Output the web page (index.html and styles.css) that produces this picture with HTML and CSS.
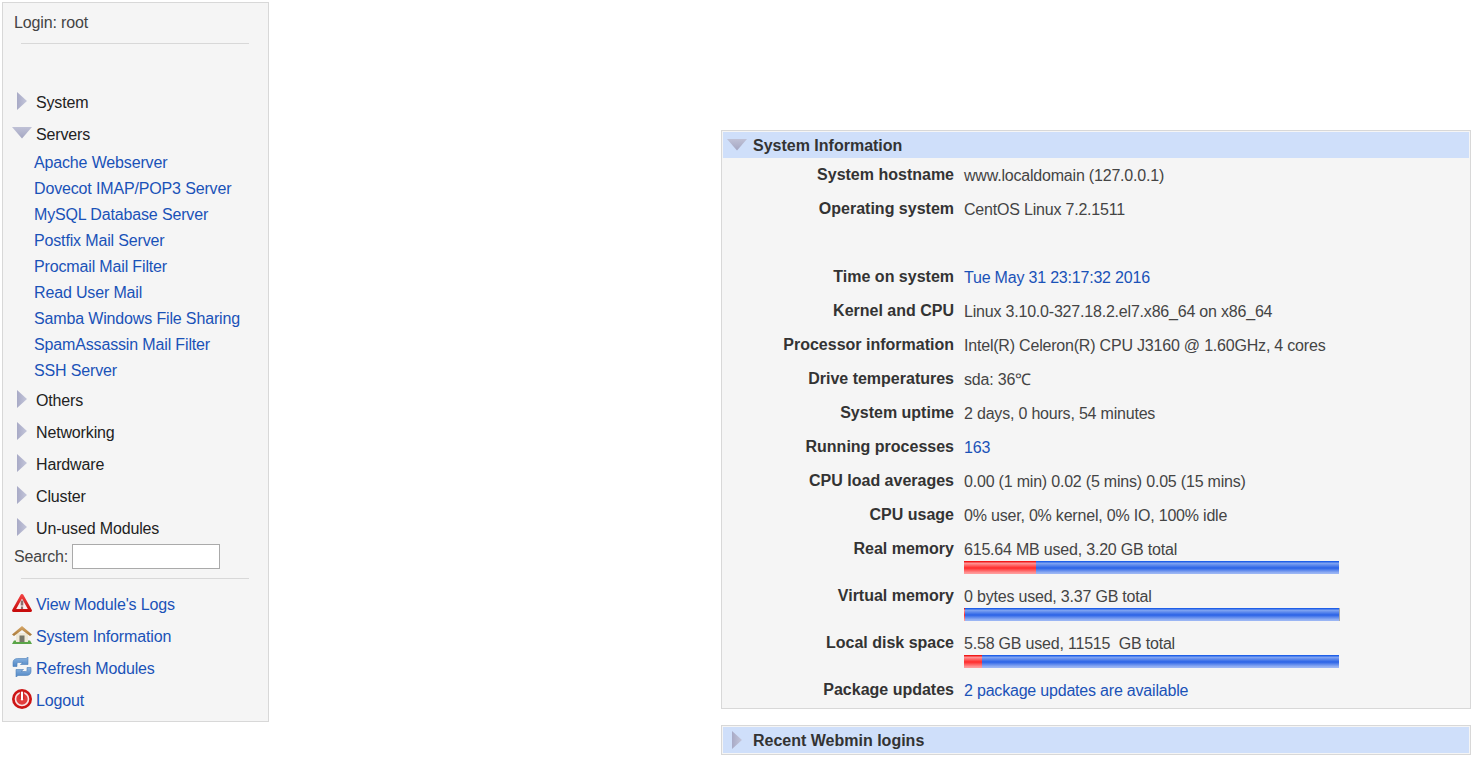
FILE: index.html
```html
<!DOCTYPE html>
<html lang="en">
<head>
    <meta charset="UTF-8">
    <title>Webmin</title>
    <link rel="stylesheet" href="styles.css">
</head>
<body>
    <svg class="defs" width="0" height="0">
        <defs>
            <linearGradient id="arrowRight" x1="0" y1="0" x2="1" y2="0">
                <stop offset="0" stop-color="#a8aac6"/>
                <stop offset="1" stop-color="#c4c6da"/>
            </linearGradient>
            <linearGradient id="arrowDown" x1="0" y1="0" x2="0" y2="1">
                <stop offset="0" stop-color="#bfc1d6"/>
                <stop offset="1" stop-color="#a4a6c2"/>
            </linearGradient>
            <linearGradient id="warnRed" x1="0" y1="0" x2="0" y2="1">
                <stop offset="0" stop-color="#f04040"/>
                <stop offset="1" stop-color="#c80c0c"/>
            </linearGradient>
            <linearGradient id="syncBlue" x1="0" y1="0" x2="0" y2="1">
                <stop offset="0" stop-color="#8db6e2"/>
                <stop offset="1" stop-color="#4f86c4"/>
            </linearGradient>
            <linearGradient id="roof" x1="0" y1="0" x2="0" y2="1">
                <stop offset="0" stop-color="#d8a868"/>
                <stop offset="1" stop-color="#a87838"/>
            </linearGradient>
        </defs>
    </svg>

    <div class="sidebar">
        <div class="login">Login: root</div>
        <hr class="rule">

        <div class="nav">
            <div class="cat"><svg class="arrow-r" viewBox="0 0 10 18"><path d="M0 0L10 9L0 18Z" fill="url(#arrowRight)"/></svg>System</div>
            <div class="cat"><svg class="arrow-d" viewBox="0 0 18 10"><path d="M-1 -1H19L9 10.5Z" fill="url(#arrowDown)"/></svg>Servers</div>
            <div class="sub">
                <a href="#">Apache Webserver</a>
                <a href="#">Dovecot IMAP/POP3 Server</a>
                <a href="#">MySQL Database Server</a>
                <a href="#">Postfix Mail Server</a>
                <a href="#">Procmail Mail Filter</a>
                <a href="#">Read User Mail</a>
                <a href="#">Samba Windows File Sharing</a>
                <a href="#">SpamAssassin Mail Filter</a>
                <a href="#">SSH Server</a>
            </div>
            <div class="cat"><svg class="arrow-r" viewBox="0 0 10 18"><path d="M0 0L10 9L0 18Z" fill="url(#arrowRight)"/></svg>Others</div>
            <div class="cat"><svg class="arrow-r" viewBox="0 0 10 18"><path d="M0 0L10 9L0 18Z" fill="url(#arrowRight)"/></svg>Networking</div>
            <div class="cat"><svg class="arrow-r" viewBox="0 0 10 18"><path d="M0 0L10 9L0 18Z" fill="url(#arrowRight)"/></svg>Hardware</div>
            <div class="cat"><svg class="arrow-r" viewBox="0 0 10 18"><path d="M0 0L10 9L0 18Z" fill="url(#arrowRight)"/></svg>Cluster</div>
            <div class="cat"><svg class="arrow-r" viewBox="0 0 10 18"><path d="M0 0L10 9L0 18Z" fill="url(#arrowRight)"/></svg>Un-used Modules</div>
        </div>

        <div class="search">
            <label for="q">Search:</label>
            <input type="text" id="q">
        </div>
        <hr class="rule rule-low">

        <div class="actions">
            <a href="#">
                <svg viewBox="0 0 20 20"><path d="M10 2.5L18.4 17.5H1.6Z" fill="#fbeeee" stroke="url(#warnRed)" stroke-width="3" stroke-linejoin="round"/><path d="M10 7.5V12.5" stroke="#8e6f6f" stroke-width="2.6"/><path d="M10 13.5V16" stroke="#8e6f6f" stroke-width="2.2"/></svg>
                View Module's Logs
            </a>
            <a href="#">
                <svg viewBox="0 0 20 20"><path d="M0 19L2 15.5H18L20 19Z" fill="#5aa548"/><path d="M4 8H16V17H4Z" fill="#efe9d8"/><path d="M7.5 10.5H12.5V17H7.5Z" fill="#77776a"/><path d="M0 9.5L10 1L20 9.5L18 11L10 5L2 11Z" fill="url(#roof)"/></svg>
                System Information
            </a>
            <a href="#">
                <svg viewBox="0 0 20 20"><path d="M1 9.5V5.5C1 3 3 1.5 5.5 1.5H14L16 0V7.5H8.5L11 5.5H6.5C5.5 5.5 5 6 5 7V9.5Z" fill="url(#syncBlue)" stroke="#4d7fb8" stroke-width=".6"/><path d="M19 10.5V14.5C19 17 17 18.5 14.5 18.5H6L4 20V12.5H11.5L9 14.5H13.5C14.5 14.5 15 14 15 13V10.5Z" fill="url(#syncBlue)" stroke="#4d7fb8" stroke-width=".6"/></svg>
                Refresh Modules
            </a>
            <a href="#">
                <svg viewBox="0 0 20 20"><circle cx="10" cy="10" r="10" fill="#cc1414"/><circle cx="10" cy="10" r="6.5" fill="#e23c3c" stroke="#fbe4e4" stroke-width="1.6"/><path d="M10 2.5V10" stroke="#cc1414" stroke-width="4.4"/><path d="M10 3.5V10.5" stroke="#fff" stroke-width="2.2" stroke-linecap="round"/></svg>
                Logout
            </a>
        </div>
    </div>

    <div class="main">
        <div class="panel">
            <div class="panel-head"><svg class="arrow-d" viewBox="0 0 18 10"><path d="M-1 -1H19L9 10.5Z" fill="url(#arrowDown)"/></svg>System Information</div>
            <div class="info">
                <div class="row"><div class="key">System hostname</div><div class="val">www.localdomain (127.0.0.1)</div></div>
                <div class="row"><div class="key">Operating system</div><div class="val">CentOS Linux 7.2.1511</div></div>
                <div class="row"></div>
                <div class="row"><div class="key">Time on system</div><div class="val"><a href="#">Tue May 31 23:17:32 2016</a></div></div>
                <div class="row"><div class="key">Kernel and CPU</div><div class="val">Linux 3.10.0-327.18.2.el7.x86_64 on x86_64</div></div>
                <div class="row"><div class="key">Processor information</div><div class="val">Intel(R) Celeron(R) CPU J3160 @ 1.60GHz, 4 cores</div></div>
                <div class="row"><div class="key">Drive temperatures</div><div class="val">sda: 36℃</div></div>
                <div class="row"><div class="key">System uptime</div><div class="val">2 days, 0 hours, 54 minutes</div></div>
                <div class="row"><div class="key">Running processes</div><div class="val"><a href="#">163</a></div></div>
                <div class="row"><div class="key">CPU load averages</div><div class="val">0.00 (1 min) 0.02 (5 mins) 0.05 (15 mins)</div></div>
                <div class="row"><div class="key">CPU usage</div><div class="val">0% user, 0% kernel, 0% IO, 100% idle</div></div>
                <div class="row row-bar"><div class="key">Real memory</div><div class="val">615.64 MB used, 3.20 GB total
                    <div class="bar"><div class="bar-used" style="width: 72px"></div></div></div></div>
                <div class="row row-bar"><div class="key">Virtual memory</div><div class="val">0 bytes used, 3.37 GB total
                    <div class="bar bar-wide"><div class="bar-used" style="width: 1px"></div></div></div></div>
                <div class="row row-bar"><div class="key">Local disk space</div><div class="val">5.58 GB used, 11515&nbsp; GB total
                    <div class="bar"><div class="bar-used" style="width: 18px"></div></div></div></div>
                <div class="row"><div class="key">Package updates</div><div class="val"><a href="#">2 package updates are available</a></div></div>
            </div>
        </div>
        <div class="panel panel-closed">
            <div class="panel-head"><svg class="arrow-r" viewBox="0 0 10 18"><path d="M0 0L10 9L0 18Z" fill="url(#arrowRight)"/></svg>Recent Webmin logins</div>
        </div>
    </div>
</body>
</html>
```

FILE: styles.css
```css
body {
    font-family: "Liberation Sans", Arial, sans-serif;
    font-size: 16px;
    line-height: 18px;
    margin: 0;
    padding: 2px 3px 0 2px;
    display: flex;
    justify-content: space-between;
    align-items: flex-start;
    color: #444;
    background-color: #fff;
}

a {
    color: #1a52b8;
    text-decoration: none;
}

.defs {
    display: block;
    position: absolute;
}

/* Menu lateral */
.sidebar {
    box-sizing: border-box;
    width: 267px;
    height: 720px;
    background-color: #f5f5f5;
    border: 1px solid #d8d8d8;
    letter-spacing: -0.15px;
}

.login {
    padding: 11px 0 0 11px;
}

.rule {
    border: none;
    border-top: 1px solid #d8d8d8;
    margin: 11px 19px 0 18px;
}

.rule-low {
    margin-top: 9px;
}

.nav {
    padding-top: 43px;
}

.cat {
    position: relative;
    height: 32px;
    padding-left: 33px;
    line-height: 32px;
    color: #222;
}

.cat .arrow-r {
    position: absolute;
    left: 14px;
    top: 5px;
}

.cat .arrow-d {
    position: absolute;
    left: 10px;
    top: 9px;
}

.arrow-r {
    width: 10px;
    height: 18px;
}

.arrow-d {
    width: 18px;
    height: 10px;
    overflow: visible;
}

.sub {
    display: flex;
    flex-direction: column;
    margin-top: -1px;
    padding: 0 0 1px 31px;
}

.sub a {
    height: 26px;
    line-height: 26px;
}

.search {
    display: flex;
    align-items: center;
    gap: 4px;
    margin-top: -1px;
    padding-left: 11px;
    height: 25px;
}

.search input {
    box-sizing: border-box;
    width: 148px;
    height: 25px;
    margin: 0;
    padding: 0 4px;
    border: 1px solid #aaa;
    background-color: #fff;
}

.actions {
    display: flex;
    flex-direction: column;
    padding: 10px 0 0 9px;
}

.actions a {
    display: flex;
    align-items: center;
    gap: 4px;
    height: 32px;
}

.actions svg {
    width: 20px;
    height: 20px;
    margin-top: -4px;
}

/* Painel de informacoes */
.main {
    box-sizing: border-box;
    width: 750px;
    padding-top: 128px;
}

.panel {
    box-sizing: border-box;
    background-color: #f5f5f5;
    border: 1px solid #d8d8d8;
    padding: 1px;
}

.panel-closed {
    margin-top: 16px;
}

.panel-head {
    position: relative;
    height: 26px;
    padding-left: 30px;
    line-height: 28px;
    font-weight: bold;
    color: #333;
    background-color: #cfdffa;
}

.panel-head .arrow-d {
    position: absolute;
    left: 5px;
    top: 8px;
}

.panel-head .arrow-r {
    position: absolute;
    left: 9px;
    top: 4px;
}

.info {
    padding-top: 3px;
    height: 546px;
}

.row {
    display: flex;
    gap: 10px;
    height: 34px;
    align-items: flex-start;
}

.row-bar {
    height: 47px;
}

.key {
    width: 231px;
    flex-shrink: 0;
    padding-top: 5px;
    text-align: right;
    font-weight: bold;
    color: #333;
}

.val {
    flex: 1;
    padding-top: 6px;
    letter-spacing: -0.2px;
}

.bar {
    display: flex;
    width: 375px;
    height: 13px;
    margin-top: 2px;
    background: linear-gradient(#1f5fe8 0, #1f5fe8 1px, #86a8f2 2px, #2a62e6 7px, #9ab5f4 12px);
}

.bar-wide {
    width: 376px;
    border-right: 1px solid #aaa;
    box-sizing: border-box;
}

.bar-used {
    height: 100%;
    background: linear-gradient(#f01818 0, #f01818 1px, #ff9a9a 2px, #ff2a2a 7px, #ff9a9a 12px);
}
```
